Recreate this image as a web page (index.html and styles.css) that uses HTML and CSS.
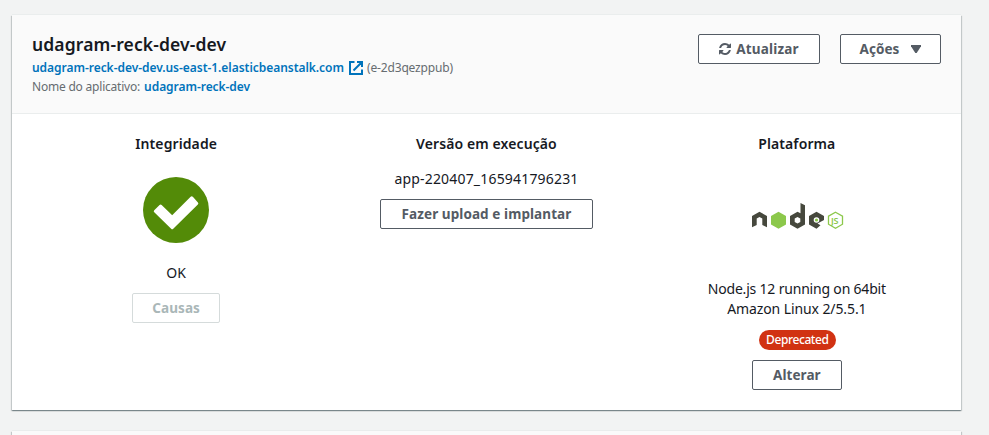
FILE: index.html
```html
<!DOCTYPE html>
<html lang="pt-BR">
<head>
<meta charset="utf-8">
<title>udagram-reck-dev-dev</title>
<link rel="stylesheet" href="styles.css">
</head>
<body>
<main class="page">
  <section class="card">
    <header class="card-header">
      <div class="heading">
        <h1 class="title"><span>udagram-reck-dev-dev</span></h1>
        <div class="line url-line">
          <a class="link url">udagram-reck-dev-dev.us-east-1.elasticbeanstalk.com</a>
          <svg class="external" viewBox="0 0 14 14" width="14" height="14"><path d="M5.5 1H1v12h12V8.500M8 1h5v5M12.500 1.500L4.500 9.500" fill="none" stroke="#0073bb" stroke-width="2"/></svg>
          <span class="env-id">(e-2d3qezppub)</span>
        </div>
        <div class="line app-line"><span class="app-label">Nome do aplicativo:</span><a class="link app-name">udagram-reck-dev</a></div>
      </div>
      <div class="actions">
        <button class="btn refresh"><svg width="12" height="12" viewBox="0 0 1536 1536"><path fill="#545b64" d="M1511 928q0 5-1 7-64 268-268 434.500T764 1536q-146 0-282.500-55T238 1324l-129 129q-19 19-45 19t-45-19-19-45V960q0-26 19-45t45-19h448q26 0 45 19t19 45-19 45l-137 137q71 66 161 102t187 36q134 0 250-65t186-179q11-17 53-117 8-23 30-23h192q13 0 22.500 9.500t9.500 22.500zm25-800v448q0 26-19 45t-45 19h-448q-26 0-45-19t-19-45 19-45l138-138Q969 256 768 256q-134 0-250 65T332 500q-11 17-53 117-8 23-30 23H50q-13 0-22.500-9.500T18 608v-7q65-268 270-434.500T768 0q146 0 284 55.500T1297 212l130-129q19-19 45-19t45 19 19 45z"/></svg><span>Atualizar</span></button>
        <button class="btn menu"><span>Ações</span><svg width="10" height="8" viewBox="0 0 10 8"><path fill="#545b64" d="M0 0h10v1.200L5.700 8H4.300L0 1.200z"/></svg></button>
      </div>
    </header>
    <div class="columns">
      <div class="column">
        <h2 class="col-title"><span>Integridade</span></h2>
        <svg class="check" width="66" height="66" viewBox="0 0 66 66"><circle cx="33" cy="33" r="33" fill="#538b08"/><path fill="#fff" stroke="#fff" stroke-width="3" stroke-linejoin="round" d="M12.300 34.200L17.600 29L29.200 40.300L48.700 20.800L53.800 26.500L29.200 50.700z"/></svg>
        <p class="text ok"><span>OK</span></p>
        <button class="btn disabled" disabled><span>Causas</span></button>
      </div>
      <div class="column">
        <h2 class="col-title"><span>Versão em execução</span></h2>
        <p class="text version"><span>app-220407_165941796231</span></p>
        <button class="btn upload"><span>Fazer upload e implantar</span></button>
      </div>
      <div class="column">
        <h2 class="col-title"><span>Plataforma</span></h2>
        <svg class="node-logo" width="92" height="27" viewBox="0 0 92 27" role="img" aria-label="Node.js">
          <g fill="#46483d">
            <path d="M0 13L7.500 8.700L15 13V24.200L10.300 22V15.500L7.500 13.900L4.700 15.500V22L0 24.200z"/>
            <path fill-rule="evenodd" d="M48.500 0L53 2.300V21.500L45.500 25.700L38 21.500V13L45.500 8.700L48.500 10.200zM45.500 14L42.700 15.600V19L45.500 20.600L48.300 19V15.600z"/>
            <path d="M64.500 8.700L72 13V17L65.500 20.500L68.500 22.300L64.500 25.700L57 21.500V13z"/>
          </g>
          <path fill="#8cc84b" d="M26.500 8.700L34 13V21.500L26.500 25.700L19 21.500V13z"/>
          <circle cx="64.500" cy="17" r="2.800" fill="#fff"/><circle cx="64.500" cy="17" r="1.600" fill="#8cc84b"/>
          <path fill="none" stroke="#8cc84b" stroke-width="1.300" d="M83.500 9.200L90.500 13.200V21.200L83.500 25.200L76.500 21.200V13.200z"/>
          <text class="logo-js" x="79" y="20.700">JS</text>
        </svg>
        <p class="text platform"><span>Node.js 12 running on 64bit</span><br><span class="second">Amazon Linux 2/5.5.1</span></p>
        <span class="badge"><span>Deprecated</span></span>
        <button class="btn change"><span>Alterar</span></button>
      </div>
    </div>
  </section>
  <section class="card next-card"></section>
</main>
</body>
</html>
```
FILE: styles.css
```css
* { box-sizing: border-box; }
html { overflow: hidden; }
body {
  margin: 0;
  background: #f2f3f3;
  color: #16191f;
  font-family: "Noto Sans", sans-serif;
  font-size: 14px;
  line-height: 20px;
}
.page {
  height: 435px;
  padding: 15px 28px 0 12px;
  overflow: hidden;
}
.card {
  height: 395px;
  background: #fff;
  box-shadow: 0 1px 1px 0 rgba(0, 28, 36, .3), 1px 1px 1px 0 rgba(0, 28, 36, .15), -1px 1px 1px 0 rgba(0, 28, 36, .15), 0 -1px 0 0 #eaeded;
}
.next-card { margin-top: 21px; background: #fafafa; }
.card-header {
  display: flex;
  justify-content: space-between;
  height: 99px;
  padding: 19px 20px 0;
  background: #fafafa;
  border-bottom: 1px solid #eaeded;
}
.title { margin: 0; font-size: 17.5px; font-weight: 600; line-height: 20px; letter-spacing: .12px; }
.line { display: flex; align-items: center; font-size: 12px; line-height: 18px; color: #666c70; }
.url-line { margin-top: 5px; }
.url { letter-spacing: -.04px; }
.env-id { letter-spacing: -.15px; }
.external { margin: 0 4px 0 5px; }
.app-line { margin-top: 1px; gap: 4px; }
.app-label { letter-spacing: -.21px; }
.app-name { letter-spacing: -.05px; }
.link { color: #0073bb; font-weight: 600; }
.actions { display: flex; gap: 20px; align-items: flex-start; }
.btn {
  display: flex;
  align-items: center;
  justify-content: center;
  height: 30px;
  padding: 0;
  background: #fff;
  border: 1px solid #545b64;
  border-radius: 2px;
  color: #545b64;
  font: 700 13.5px/20px "Noto Sans", sans-serif;
  letter-spacing: .08px;
  white-space: nowrap;
}
.refresh { width: 122px; gap: 5px; letter-spacing: .2px; }
.menu { width: 101px; gap: 12px; }
.columns {
  display: grid;
  grid-template-columns: repeat(3, 1fr);
  gap: 22px;
  padding: 20px 20px 0;
}
.column { display: flex; flex-direction: column; align-items: center; text-align: center; }
.col-title { margin: 0; font-size: 14px; font-weight: 600; line-height: 20px; letter-spacing: .1px; }
.text { margin: 0; white-space: nowrap; }
.check { margin-top: 23px; }
.ok { margin: 20px 0 10px; }
.disabled { width: 88px; border-color: #d5dbdb; color: #aab7b8; }
.version { margin: 15px 0 10px; letter-spacing: .18px; }
.upload { width: 213px; }
.node-logo { margin-top: 49px; transform: translateX(1px); }
.logo-js { font: 600 9px "Noto Sans", sans-serif; fill: #8cc84b; letter-spacing: -.3px; }
.platform { margin-top: 49px; letter-spacing: -.19px; }
.second { letter-spacing: -.1px; }
.badge {
  display: flex;
  align-items: center;
  justify-content: center;
  width: 77px;
  height: 20px;
  margin: 11px 0 10px 1px;
  border-radius: 10px;
  background: #d13212;
  color: #fff;
  font-size: 12px;
  font-weight: 500;
  letter-spacing: -.4px;
}
.change { width: 90px; }
```
